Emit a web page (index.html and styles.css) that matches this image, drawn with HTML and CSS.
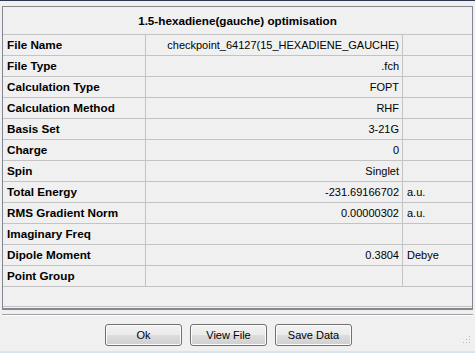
FILE: index.html
```html
<!DOCTYPE html>
<html lang="en">
<head>
    <meta charset="UTF-8">
    <title>1.5-hexadiene(gauche) optimisation</title>
    <link rel="stylesheet" href="styles.css">
</head>
<body>

    <div class="window">
        <div class="grid">
            <div class="title-row">1.5-hexadiene(gauche) optimisation</div>

            <div class="row"><div class="name">File Name</div><div class="value">checkpoint_64127(15_HEXADIENE_GAUCHE)</div><div class="unit"></div></div>
            <div class="row"><div class="name">File Type</div><div class="value">.fch</div><div class="unit"></div></div>
            <div class="row"><div class="name">Calculation Type</div><div class="value">FOPT</div><div class="unit"></div></div>
            <div class="row"><div class="name">Calculation Method</div><div class="value">RHF</div><div class="unit"></div></div>
            <div class="row"><div class="name">Basis Set</div><div class="value">3-21G</div><div class="unit"></div></div>
            <div class="row"><div class="name">Charge</div><div class="value">0</div><div class="unit"></div></div>
            <div class="row"><div class="name">Spin</div><div class="value">Singlet</div><div class="unit"></div></div>
            <div class="row"><div class="name">Total Energy</div><div class="value">-231.69166702</div><div class="unit">a.u.</div></div>
            <div class="row"><div class="name">RMS Gradient Norm</div><div class="value">0.00000302</div><div class="unit">a.u.</div></div>
            <div class="row"><div class="name">Imaginary Freq</div><div class="value"></div><div class="unit"></div></div>
            <div class="row"><div class="name">Dipole Moment</div><div class="value">0.3804</div><div class="unit">Debye</div></div>
            <div class="row"><div class="name">Point Group</div><div class="value"></div><div class="unit"></div></div>

            <div class="filler"></div>
        </div>

        <div class="separator"></div>

        <div class="buttons">
            <button type="button">Ok</button>
            <button type="button">View File</button>
            <button type="button">Save Data</button>
        </div>

        <svg class="grip" width="9" height="9" viewBox="0 0 9 9">
            <rect x="7" y="1" width="1" height="1" fill="#b8b8b8"/>
            <rect x="4" y="4" width="1" height="1" fill="#b8b8b8"/>
            <rect x="7" y="4" width="1" height="1" fill="#b8b8b8"/>
            <rect x="1" y="7" width="1" height="1" fill="#b8b8b8"/>
            <rect x="4" y="7" width="1" height="1" fill="#b8b8b8"/>
            <rect x="7" y="7" width="1" height="1" fill="#b8b8b8"/>
        </svg>
    </div>

</body>
</html>
```

FILE: styles.css
```css
body {
    margin: 0;
    padding: 0;
    background-color: #f0f0f0;
    font-family: "Liberation Sans", Arial, sans-serif;
    font-size: 11px;
    color: #000;
}

.window {
    position: relative;
    width: 475px;
    height: 353px;
    box-sizing: border-box;
    border-top: 1px solid #2b3a50;
    border-bottom: 2px solid #d7e4f2;
    background-color: #f0f0f0;
    overflow: hidden;
}

.grid {
    margin: 5px 2px 0 2px;
    border: 1px solid #828790;
    border-bottom-width: 2px;
}

.title-row {
    height: 27px;
    line-height: 28px;
    text-align: center;
    font-weight: bold;
    font-size: 11.7px;
    border-bottom: 1px solid #c3c3c3;
}

.row {
    display: flex;
    height: 20px;
    line-height: 20px;
    border-bottom: 1px solid #c3c3c3;
}

.name {
    width: 138px;
    padding-left: 4px;
    font-weight: bold;
    font-size: 11.7px;
    border-right: 1px solid #c3c3c3;
    white-space: nowrap;
}

.value {
    width: 253px;
    padding-right: 3px;
    text-align: right;
    border-right: 1px solid #c3c3c3;
    white-space: nowrap;
    overflow: hidden;
}

.unit {
    flex: 1;
    padding-left: 4px;
}

.filler {
    height: 19px;
    border-bottom: 1px solid #c3c3c3;
    margin-bottom: 1px;
}

.separator {
    margin: 4px 2px 0 2px;
    height: 1px;
    background-color: #a0a0a0;
    border-bottom: 1px solid #ffffff;
}

.buttons {
    display: flex;
    gap: 8px;
    padding: 8px 0 0 105px;
}

button {
    width: 77px;
    height: 22px;
    padding: 0;
    font-family: "Liberation Sans", Arial, sans-serif;
    font-size: 11px;
    color: #000;
    border: 1px solid #707070;
    border-radius: 3px;
    background: linear-gradient(#f2f2f2 0%, #ebebeb 50%, #dddddd 51%, #cfcfcf 100%);
    box-shadow: inset 0 0 0 1px #fcfcfc;
}

.grip {
    position: absolute;
    right: 4px;
    bottom: 7px;
}
```
